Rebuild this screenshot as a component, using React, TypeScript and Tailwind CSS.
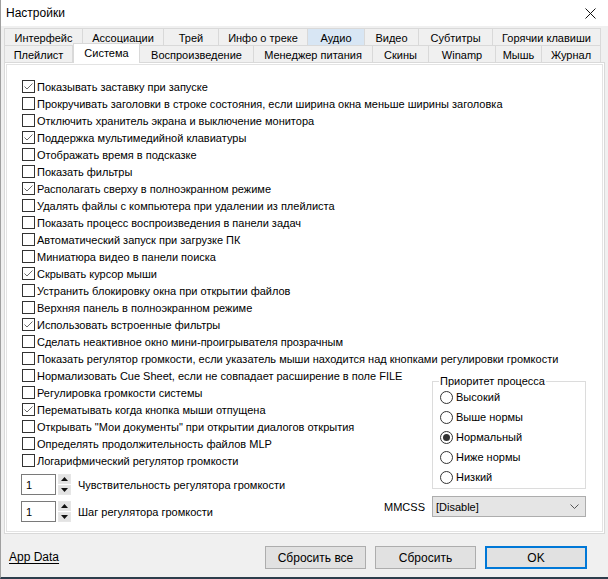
import React from "react";

const rows: [string, boolean][] = [
  ["Показывать заставку при запуске", true],
  ["Прокручивать заголовки в строке состояния, если ширина окна меньше ширины заголовка", false],
  ["Отключить хранитель экрана и выключение монитора", false],
  ["Поддержка мультимедийной клавиатуры", true],
  ["Отображать время в подсказке", false],
  ["Показать фильтры", false],
  ["Располагать сверху в полноэкранном режиме", true],
  ["Удалять файлы с компьютера при удалении из плейлиста", false],
  ["Показать процесс воспроизведения в панели задач", false],
  ["Автоматический запуск при загрузке ПК", false],
  ["Миниатюра видео в панели поиска", false],
  ["Скрывать курсор мыши", true],
  ["Устранить блокировку окна при открытии файлов", false],
  ["Верхняя панель в полноэкранном режиме", false],
  ["Использовать встроенные фильтры", true],
  ["Сделать неактивное окно мини-проигрывателя прозрачным", false],
  ["Показать регулятор громкости, если указатель мыши находится над кнопками регулировки громкости", false],
];

const lowerRows: [string, boolean][] = [
  ["Нормализовать Cue Sheet, если не совпадает расширение в поле FILE", false],
  ["Регулировка громкости системы", false],
  ["Перематывать когда кнопка мыши отпущена", true],
  ["Открывать \"Мои документы\" при открытии диалогов открытия", false],
  ["Определять продолжительность файлов MLP", false],
  ["Логарифмический регулятор громкости", false],
];

const tabsTop = [
  { label: "Интерфейс", w: "w-[79px]" },
  { label: "Ассоциации", w: "w-[81px]" },
  { label: "Трей", w: "w-[55px]" },
  { label: "Инфо о треке", w: "w-[89px]" },
  { label: "Аудио", w: "w-[57px]", hover: true },
  { label: "Видео", w: "w-[54px]" },
  { label: "Субтитры", w: "w-[74px]" },
  { label: "Горячии клавиши", w: "w-[108px]" },
];

const tabsBottom = [
  { label: "Плейлист", w: "w-[69px]" },
  { label: "Система", w: "w-[67px]", active: true },
  { label: "Воспроизведение", w: "w-[114px]" },
  { label: "Менеджер питания", w: "w-[119px]" },
  { label: "Скины", w: "w-[56px]" },
  { label: "Winamp", w: "w-[67px]" },
  { label: "Мышь", w: "w-[46px]" },
  { label: "Журнал", w: "w-[59px]" },
];

const Check = ({ label, checked }: { label: string; checked: boolean }) => (
  <div className="flex h-[17px] items-center whitespace-nowrap">
    <span className="flex h-[13px] w-[13px] shrink-0 items-center justify-center border border-[#333333] bg-white">
      {checked && (
        <svg width="11" height="11" viewBox="0 0 11 11">
          <polyline points="1.5,5.5 4,8 9.5,2.5" fill="none" stroke="#6a6a6a" strokeWidth="1" />
        </svg>
      )}
    </span>
    <span className="ml-[2px]">{label}</span>
  </div>
);

const Radio = ({ label, checked }: { label: string; checked?: boolean }) => (
  <div className="flex h-[20px] items-center whitespace-nowrap">
    <span className="flex h-[13px] w-[13px] shrink-0 items-center justify-center rounded-full border border-[#333333] bg-white">
      {checked && <span className="h-[7px] w-[7px] rounded-full bg-[#333333]" />}
    </span>
    <span className="ml-[3px]">{label}</span>
  </div>
);

const Spin = ({ label }: { label: string }) => (
  <div className="flex h-[21px] items-center">
    <div className="ml-[-1px] flex h-[21px] w-[35px] items-center border border-[#7a7a7a] bg-white pl-[4px]">1</div>
    <div className="ml-[2px] flex h-[21px] w-[13px] flex-col">
      <div className="flex h-[10px] items-center justify-center border border-[#e6e6e6] bg-[#e3e3e3]">
        <svg width="7" height="4" viewBox="0 0 7 4"><polygon points="0,4 7,4 3.5,0" fill="#111" /></svg>
      </div>
      <div className="mt-px flex h-[10px] items-center justify-center border border-[#e6e6e6] bg-[#e3e3e3]">
        <svg width="7" height="4" viewBox="0 0 7 4"><polygon points="0,0 7,0 3.5,4" fill="#111" /></svg>
      </div>
    </div>
    <span className="ml-[7px] whitespace-nowrap">{label}</span>
  </div>
);

export default function App() {
  return (
    <div className="flex h-[579px] w-[608px] flex-col border-b-2 border-l border-[#2d3e4c] border-l-[#a0a0a0] bg-[#f0f0f0] font-['Liberation_Sans',Arial,sans-serif] text-[11px] leading-[16px] text-black">
      {/* title bar */}
      <div className="flex h-[26px] shrink-0 items-center justify-between bg-white pl-[5px] pr-[12px]">
        <span className="text-[12px]">Настройки</span>
        <svg width="11" height="11" viewBox="0 0 11 11">
          <path d="M0.5 0.5 L10.5 10.5 M10.5 0.5 L0.5 10.5" stroke="#111" strokeWidth="1" />
        </svg>
      </div>

      {/* tabs */}
      <div className="mt-[2px] px-[3px]">
        <div className="flex h-[17px]">
          {tabsTop.map((t, i) => (
            <div
              key={t.label}
              className={`${t.w} flex items-center justify-center border-t border-r border-[#d9d9d9] pt-[2px] ${i === 0 ? "border-l" : ""} ${t.hover ? "bg-[#d8e6f4]" : "bg-[#f0f0f0]"}`}
            >
              {t.label}
            </div>
          ))}
        </div>
        <div className="flex h-[17px] items-end">
          {tabsBottom.map((t, i) =>
            t.active ? (
              <div
                key={t.label}
                className={`${t.w} relative z-10 mb-[-1px] flex h-[20px] items-center justify-center border-t border-r border-l border-[#d9d9d9] bg-white pb-[1px]`}
              >
                {t.label}
              </div>
            ) : (
              <div
                key={t.label}
                className={`${t.w} flex h-[17px] items-center justify-center border-t border-r border-[#d9d9d9] bg-[#f0f0f0] pt-[2px] ${i === 0 ? "border-l" : ""}`}
              >
                {t.label}
              </div>
            )
          )}
        </div>
      </div>

      {/* page */}
      <div className="mx-[3px] flex-1 border border-[#d9d9d9] bg-white">
        <div className="m-[1px] h-[468px] border border-[#e3e3e3] pl-[15px] pt-[13px]">
          {rows.map(([l, c]) => (
            <Check key={l} label={l} checked={c} />
          ))}
          <div className="flex">
            <div className="w-[358px] shrink-0">
              {lowerRows.map(([l, c]) => (
                <Check key={l} label={l} checked={c} />
              ))}
              <div className="mt-[5px] flex flex-col gap-[6px]">
                <Spin label="Чувствительность регулятора громкости" />
                <Spin label="Шаг регулятора громкости" />
              </div>
            </div>
            <div className="flex w-[206px] flex-col items-end">
              <fieldset className="mt-[6px] w-[154px] border border-[#dcdcdc] pb-[1px] pl-[7px]">
                <legend className="ml-[-1px] px-[1px] whitespace-nowrap">Приоритет процесса</legend>
                <div className="-mt-[2px]">
                  <Radio label="Высокий" />
                  <Radio label="Выше нормы" />
                  <Radio label="Нормальный" checked />
                  <Radio label="Ниже нормы" />
                  <Radio label="Низкий" />
                </div>
              </fieldset>
              <div className="mt-[7px] flex items-center">
                <span className="mr-[7px]">MMCSS</span>
                <div className="flex h-[21px] w-[154px] items-center justify-between border border-[#adadad] bg-[#e5e5e5] pl-[3px] pr-[6px]">
                  <span>[Disable]</span>
                  <svg width="9" height="5" viewBox="0 0 9 5">
                    <polyline points="0.5,0.5 4.5,4.5 8.5,0.5" fill="none" stroke="#555" strokeWidth="1" />
                  </svg>
                </div>
              </div>
            </div>
          </div>
        </div>
      </div>

      {/* footer */}
      <div className="flex h-[43px] shrink-0 items-start pl-[8px] pt-[12px]">
        <span className="mt-[3px] text-[12px] underline underline-offset-2">App Data</span>
        <div className="ml-auto mr-[21px] flex gap-[9px]">
          <button className="h-[23px] w-[101px] border border-[#adadad] bg-[#e1e1e1] text-[12px]">Сбросить все</button>
          <button className="h-[23px] w-[101px] border border-[#adadad] bg-[#e1e1e1] text-[12px]">Сбросить</button>
          <button className="h-[23px] w-[102px] border-2 border-[#0078d7] bg-[#e1e1e1] text-[12px]">OK</button>
        </div>
      </div>
    </div>
  );
}
